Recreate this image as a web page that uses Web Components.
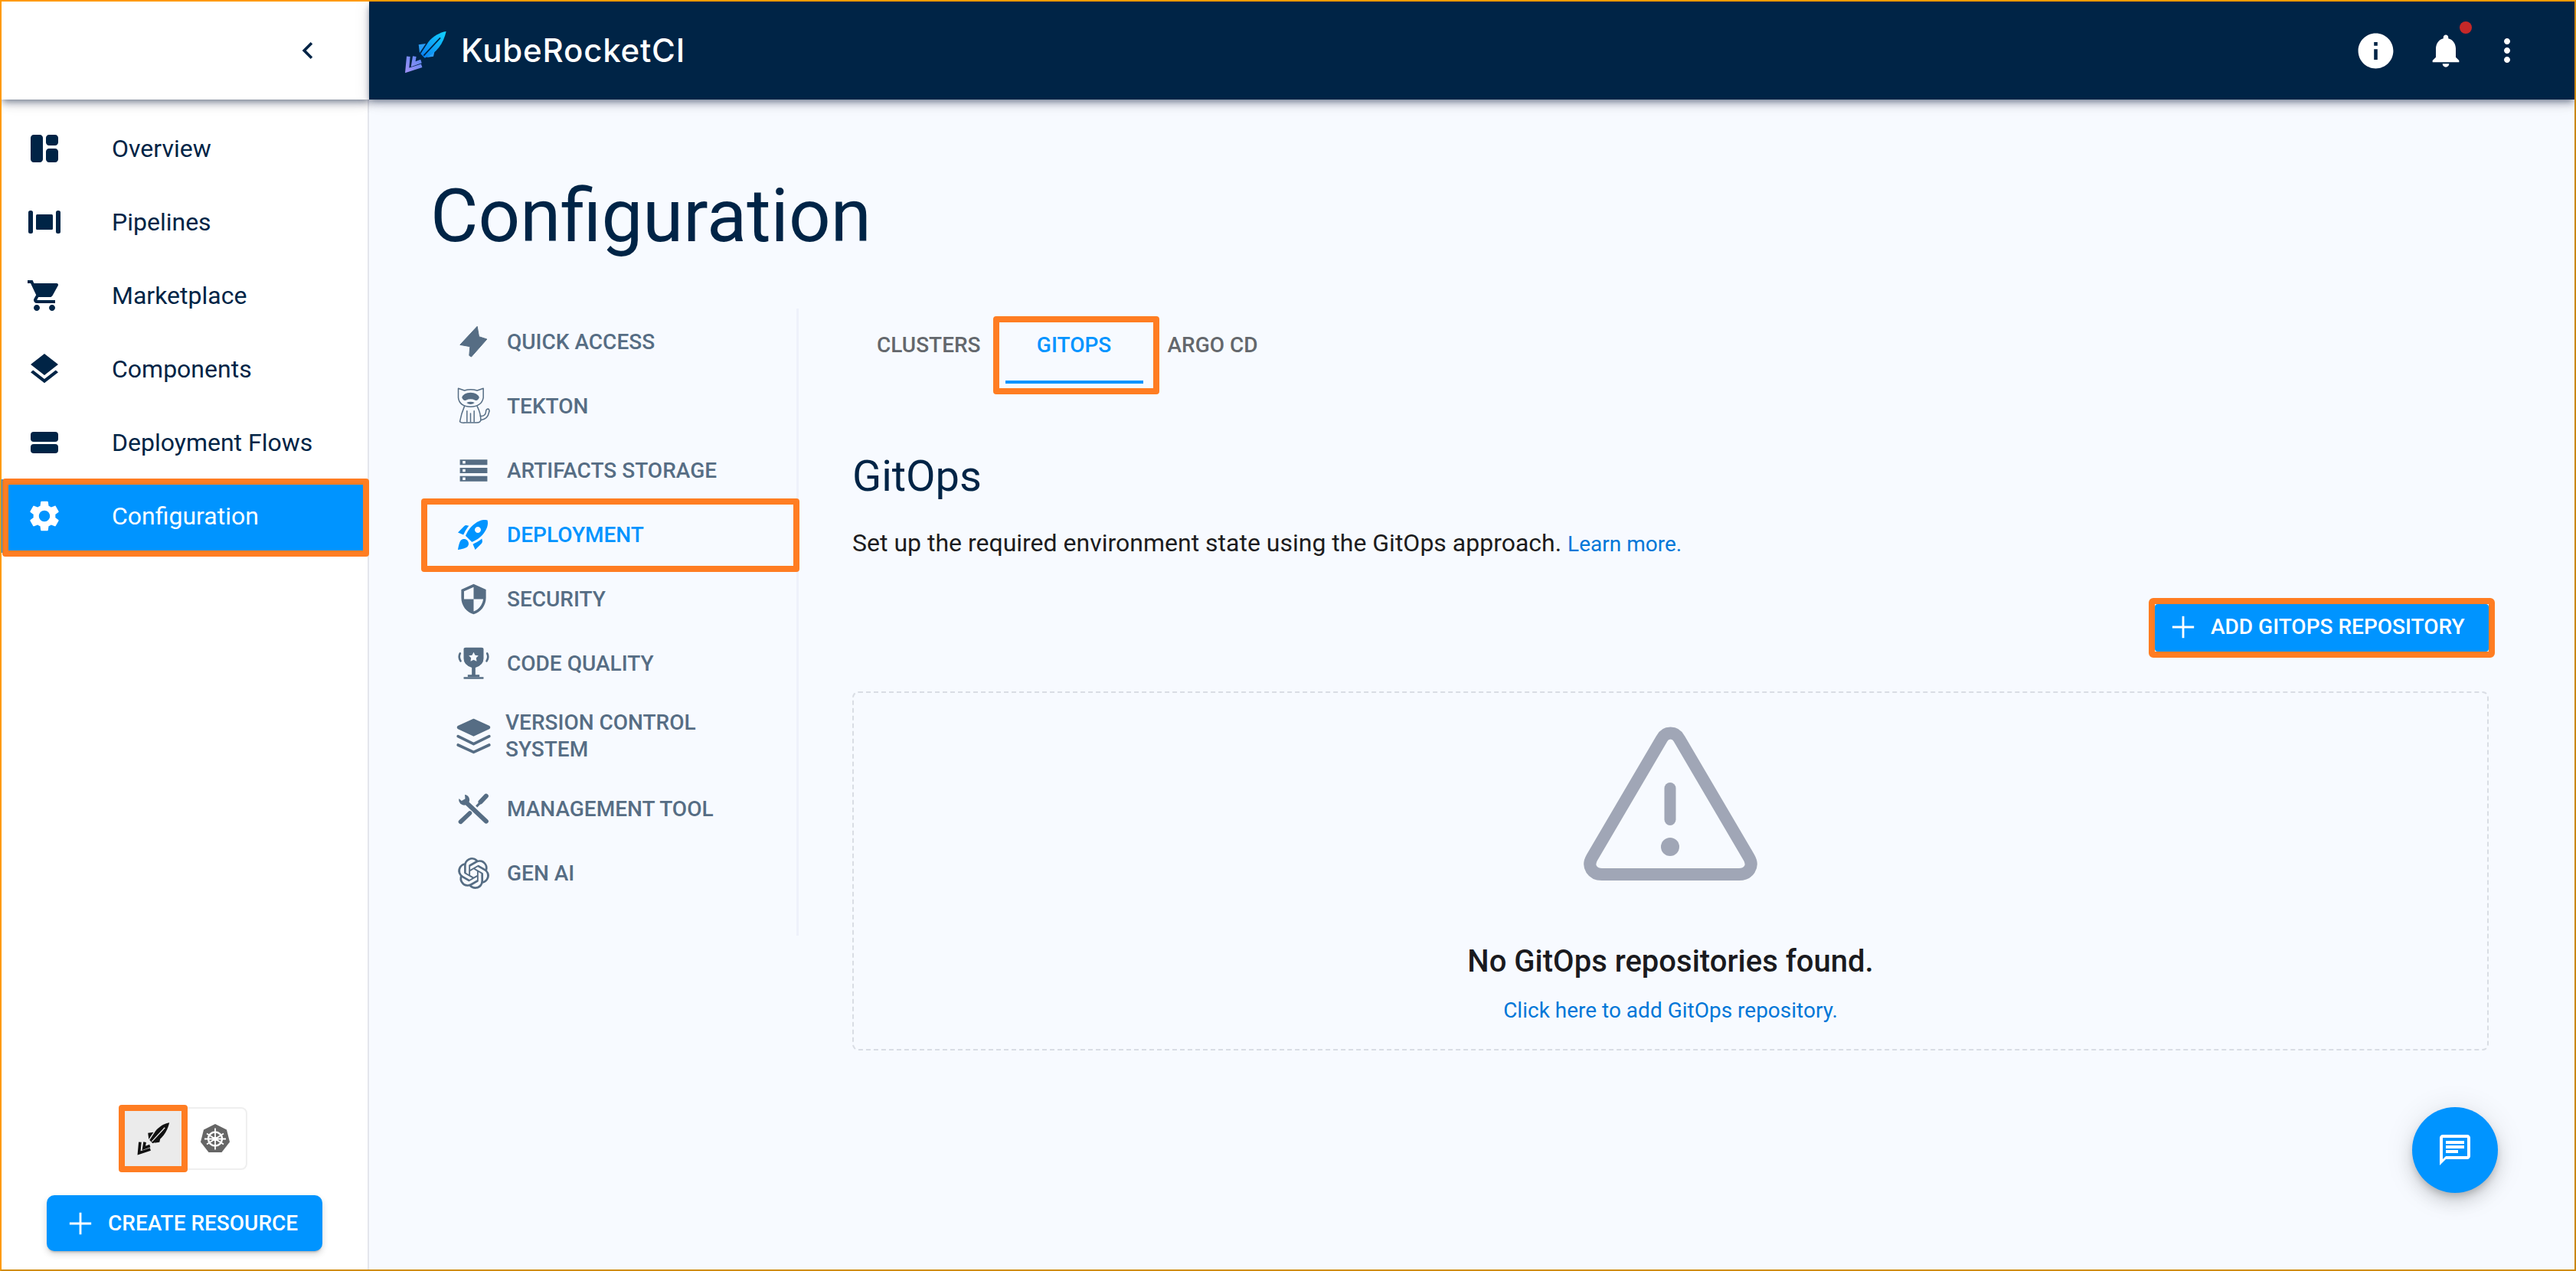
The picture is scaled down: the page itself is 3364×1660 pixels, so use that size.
<!DOCTYPE html>
<html lang="en">
<head>
<meta charset="utf-8">
<title>KubeRocketCI - Configuration</title>
<style>
  html, body { margin: 0; padding: 0; height: 100%; background: #f7faff; }
  body { font-family: Roboto, "Liberation Sans", sans-serif; }
</style>
</head>
<body>
<krci-app>
  <krci-sidebar-head slot="head"></krci-sidebar-head>
  <krci-topbar slot="top"></krci-topbar>

  <krci-sidebar slot="side">
    <krci-nav-item icon="dashboard">Overview</krci-nav-item>
    <krci-nav-item icon="pipelines">Pipelines</krci-nav-item>
    <krci-nav-item icon="cart">Marketplace</krci-nav-item>
    <krci-nav-item icon="layers">Components</krci-nav-item>
    <krci-nav-item icon="flows">Deployment Flows</krci-nav-item>
    <krci-nav-item icon="gear" active>Configuration</krci-nav-item>
    <krci-cluster-switch slot="bottom"></krci-cluster-switch>
    <krci-button slot="bottom" kind="create">CREATE RESOURCE</krci-button>
  </krci-sidebar>

  <krci-page slot="main" title="Configuration">
    <krci-settings-nav slot="nav">
      <krci-settings-item icon="bolt">QUICK ACCESS</krci-settings-item>
      <krci-settings-item icon="tekton">TEKTON</krci-settings-item>
      <krci-settings-item icon="storage">ARTIFACTS STORAGE</krci-settings-item>
      <krci-settings-item icon="rocket" active>DEPLOYMENT</krci-settings-item>
      <krci-settings-item icon="security">SECURITY</krci-settings-item>
      <krci-settings-item icon="trophy">CODE QUALITY</krci-settings-item>
      <krci-settings-item icon="stack" tall>VERSION CONTROL SYSTEM</krci-settings-item>
      <krci-settings-item icon="tools">MANAGEMENT TOOL</krci-settings-item>
      <krci-settings-item icon="openai">GEN AI</krci-settings-item>
    </krci-settings-nav>

    <krci-tabs>
      <krci-tab>CLUSTERS</krci-tab>
      <krci-tab active>GITOPS</krci-tab>
      <krci-tab>ARGO CD</krci-tab>
    </krci-tabs>
    <krci-section heading="GitOps">
      Set up the required environment state using the GitOps approach.
      <a slot="learn">Learn more.</a>
    </krci-section>
    <krci-toolbar>
      <krci-button kind="add">ADD GITOPS REPOSITORY</krci-button>
    </krci-toolbar>
    <krci-empty message="No GitOps repositories found." action="Click here to add GitOps repository."></krci-empty>
    <krci-fab slot="float"></krci-fab>
  </krci-page>
</krci-app>

<script>
const ICONS = {
  dashboard: ['0 0 24 24', '<path d="M9 21H5c-1.1 0-2-.9-2-2V5c0-1.1.9-2 2-2h4c1.1 0 2 .9 2 2v14c0 1.1-.9 2-2 2zm6 0h4c1.1 0 2-.9 2-2v-5c0-1.1-.9-2-2-2h-4c-1.1 0-2 .9-2 2v5c0 1.1.9 2 2 2zm6-13V5c0-1.1-.9-2-2-2h-4c-1.1 0-2 .9-2 2v3c0 1.1.9 2 2 2h4c1.1 0 2-.9 2-2z"/>'],
  pipelines: ['0 0 48 48', '<rect x="3" y="9" width="6" height="30" rx="2.5"/><rect x="39" y="9" width="6" height="30" rx="2.5"/><rect x="13" y="14" width="22" height="20" rx="1.5"/>'],
  cart: ['0 0 24 24', '<path d="M7 18c-1.1 0-1.99.9-1.99 2S5.9 22 7 22s2-.9 2-2-.9-2-2-2zM1 2v2h2l3.6 7.59-1.35 2.45c-.16.28-.25.61-.25.96 0 1.1.9 2 2 2h12v-2H7.42c-.14 0-.25-.11-.25-.25l.03-.12.9-1.63h7.45c.75 0 1.41-.41 1.75-1.03l3.58-6.49c.08-.14.12-.31.12-.48 0-.55-.45-1-1-1H5.21l-.94-2H1zm16 16c-1.1 0-1.99.9-1.99 2s.89 2 1.99 2 2-.9 2-2-.9-2-2-2z"/>'],
  layers: ['0 0 24 24', '<path d="M11.99 18.54l-7.37-5.73L3 14.07l9 7 9-7-1.63-1.27-7.38 5.74zM12 16l7.36-5.73L21 9l-9-7-9 7 1.63 1.27L12 16z"/>'],
  flows: ['0 0 48 48', '<rect x="6" y="10" width="36" height="13" rx="4"/><rect x="6" y="26" width="36" height="12" rx="4"/>'],
  gear: ['0 0 24 24', '<path d="M19.14 12.94c.04-.3.06-.61.06-.94 0-.32-.02-.64-.07-.94l2.03-1.58c.18-.14.23-.41.12-.61l-1.92-3.32c-.12-.22-.37-.29-.59-.22l-2.39.96c-.5-.38-1.03-.7-1.62-.94l-.36-2.54c-.04-.24-.24-.41-.48-.41h-3.84c-.24 0-.43.17-.47.41l-.36 2.54c-.59.24-1.13.57-1.62.94l-2.39-.96c-.22-.08-.47 0-.59.22L2.74 8.87c-.12.21-.08.47.12.61l2.03 1.58c-.05.3-.09.63-.09.94s.02.64.07.94l-2.03 1.58c-.18.14-.23.41-.12.61l1.92 3.32c.12.22.37.29.59.22l2.39-.96c.5.38 1.03.7 1.62.94l.36 2.54c.05.24.24.41.48.41h3.84c.24 0 .44-.17.47-.41l.36-2.54c.59-.24 1.13-.56 1.62-.94l2.39.96c.22.08.47 0 .59-.22l1.92-3.32c.12-.22.07-.47-.12-.61l-2.01-1.58zM12 15.6c-1.98 0-3.6-1.62-3.6-3.6s1.62-3.6 3.6-3.6 3.6 1.62 3.6 3.6-1.62 3.6-3.6 3.6z"/>'],
  bolt: ['213 65 144 144', '<path d="M299 78 L306 118 L337 128 L276 197 L268 192 L271 157 L232 150 Z" stroke="currentColor" stroke-width="3" stroke-linejoin="round"/>'],
  tekton: ['212 312 144 156', `<g fill="none" stroke="currentColor" stroke-width="4.500" stroke-linejoin="round" stroke-linecap="round">
      <path d="M224 322 L248 330 Q272 322 298 330 L322 322 L322 358 Q316 392 272 394 Q228 392 224 358 Z"/>
      <path d="M248 392 Q236 420 230 452 Q236 458 250 456 L296 456 Q312 456 312 444 Q312 420 298 392"/>
      <path d="M258 410 L258 452 M286 410 L286 452 M272 420 L272 452"/>
      <path d="M310 430 Q330 432 332 414 Q332 402 342 402 Q348 408 344 416 Q340 442 312 446"/>
    </g>
    <path d="M238 358 Q244 338 272 338 Q300 338 306 358 Q300 372 290 368 Q272 360 254 368 Q244 372 238 358Z"/>
    <path d="M256 378 Q272 390 288 378 Q272 370 256 378Z"/>`],
  storage: ['0 0 24 24', '<path d="M2 20h20v-4H2v4zm2-3h2v2H4v-2zM2 4v4h20V4H2zm4 3H4V5h2v2zm-4 7h20v-4H2v4zm2-3h2v2H4v-2z"/>'],
  rocket: ['0 0 24 24', '<path fill-rule="evenodd" d="M9.19 6.35c-2.04 2.29-3.44 5.58-3.57 5.89L2 10.69l4.05-4.05c.47-.47 1.15-.68 1.81-.55l1.33.26zM11.17 17s3.74-1.55 5.89-3.7c5.4-5.4 4.5-9.62 4.21-10.57-.95-.3-5.17-1.19-10.57 4.21C8.55 9.09 7 12.83 7 12.83L11.17 17zm6.48-2.19c-2.29 2.04-5.58 3.44-5.89 3.57L13.31 22l4.05-4.05c.47-.47.68-1.15.55-1.81l-.26-1.33zM9 18c0 .83-.34 1.58-.88 2.12C6.94 21.3 2 22 2 22s.7-4.94 1.88-6.12C4.42 15.34 5.17 15 6 15c1.66 0 3 1.34 3 3zm4-9c0-1.1.9-2 2-2s2 .9 2 2-.9 2-2 2-2-.9-2-2z"/>'],
  security: ['0 0 24 24', '<path d="M12 1L3 5v6c0 5.55 3.84 10.74 9 12 5.16-1.26 9-6.45 9-12V5l-9-4zm0 10.99h7c-.53 4.12-3.28 7.79-7 8.94V12H5V6.3l7-3.11v8.8z"/>'],
  trophy: ['213 128 144 144', `<path d="M246 146 Q246 139 254 139 H316 Q324 139 324 146 V182 Q324 208 292 218 V246 H308 V254 H262 V246 H278 V218 Q246 208 246 182 Z"/>
    <rect x="246" y="255" width="78" height="7" rx="1"/>
    <path d="M232 162 Q224 176 234 192 M338 162 Q346 176 336 192" fill="none" stroke="currentColor" stroke-width="8" stroke-linecap="round"/>
    <path d="M285 157 L291 169 L304 171 L295 180 L297 193 L285 187 L273 193 L275 180 L266 171 L279 169 Z" fill="#f7faff"/>`],
  stack: ['210 410 144 144', `<path d="M282 418 L343 446 Q346 449 343 452 L282 481 L221 452 Q218 449 221 446 Z" stroke="currentColor" stroke-width="6" stroke-linejoin="round"/>
    <path d="M221 484 L282 514 L343 484 M221 518 L282 546 L343 518" fill="none" stroke="currentColor" stroke-width="11" stroke-linecap="round" stroke-linejoin="round"/>`],
  tools: ['213 696 144 144', `<path d="M260 748 L334 818" stroke="currentColor" stroke-width="18" stroke-linecap="round"/>
    <circle cx="248" cy="734" r="21"/>
    <path d="M222 708 L250 708 L252 730 L238 738 L224 726 Z" fill="#f7faff"/>
    <path d="M234 820 L270 786" stroke="currentColor" stroke-width="17" stroke-linecap="round"/>
    <path d="M296 760 L314 742" stroke="currentColor" stroke-width="9"/>
    <path d="M312 742 L334 719" stroke="currentColor" stroke-width="18" stroke-linecap="round"/>`],
  openai: ['0 0 24 24', '<path d="M22.2819 9.8211a5.9847 5.9847 0 0 0-.5157-4.9108 6.0462 6.0462 0 0 0-6.5098-2.9A6.0651 6.0651 0 0 0 4.9807 4.1818a5.9847 5.9847 0 0 0-3.9977 2.9 6.0462 6.0462 0 0 0 .7427 7.0966 5.98 5.98 0 0 0 .511 4.9107 6.051 6.051 0 0 0 6.5146 2.9001A5.9847 5.9847 0 0 0 13.2599 24a6.0557 6.0557 0 0 0 5.7718-4.2058 5.9894 5.9894 0 0 0 3.9977-2.9001 6.0557 6.0557 0 0 0-.7475-7.0729zm-9.022 12.6081a4.4755 4.4755 0 0 1-2.8764-1.0408l.1419-.0804 4.7783-2.7582a.7948.7948 0 0 0 .3927-.6813v-6.7369l2.02 1.1686a.071.071 0 0 1 .038.052v5.5826a4.504 4.504 0 0 1-4.4945 4.4944zm-9.6607-4.1254a4.4708 4.4708 0 0 1-.5346-3.0137l.142.0852 4.783 2.7582a.7712.7712 0 0 0 .7806 0l5.8428-3.3685v2.3324a.0804.0804 0 0 1-.0332.0615L9.74 19.9502a4.4992 4.4992 0 0 1-6.1408-1.6464zM2.3408 7.8956a4.485 4.485 0 0 1 2.3655-1.9728V11.6a.7664.7664 0 0 0 .3879.6765l5.8144 3.3543-2.0201 1.1685a.0757.0757 0 0 1-.071 0l-4.8303-2.7865A4.504 4.504 0 0 1 2.3408 7.872zm16.5963 3.8558L13.1038 8.364 15.1192 7.2a.0757.0757 0 0 1 .071 0l4.8303 2.7913a4.4944 4.4944 0 0 1-.6765 8.1042v-5.6772a.79.79 0 0 0-.407-.667zm2.0107-3.0231l-.142-.0852-4.7735-2.7818a.7759.7759 0 0 0-.7854 0L9.409 9.2297V6.8974a.0662.0662 0 0 1 .0284-.0615l4.8303-2.7866a4.4992 4.4992 0 0 1 6.6802 4.66zM8.3065 12.863l-2.02-1.1638a.0804.0804 0 0 1-.038-.0567V6.0742a4.4992 4.4992 0 0 1 7.3757-3.4537l-.142.0805L8.704 5.459a.7948.7948 0 0 0-.3927.6813zm1.0976-2.3654l2.602-1.4998 2.6069 1.4998v2.9994l-2.5974 1.4997-2.6067-1.4997Z"/>'],
  plus: ['0 0 24 24', '<path d="M11 2h2v9h9v2h-9v9h-2v-9H2v-2h9z"/>'],
  chevron: ['0 0 24 24', '<path d="M15.41 7.41L14 6l-6 6 6 6 1.41-1.41L10.83 12z"/>'],
  info: ['0 0 24 24', '<path d="M12 2C6.48 2 2 6.48 2 12s4.48 10 10 10 10-4.48 10-10S17.52 2 12 2zm1 15h-2v-6h2v6zm0-8h-2V7h2v2z"/>'],
  bell: ['0 0 24 24', '<path d="M12 22c1.1 0 2-.9 2-2h-4c0 1.1.89 2 2 2zm6-6v-5c0-3.07-1.64-5.64-4.5-6.32V4c0-.83-.67-1.5-1.5-1.5s-1.5.67-1.5 1.5v.68C7.63 5.36 6 7.92 6 11v5l-2 2v1h16v-1l-2-2z"/>'],
  dots: ['0 0 24 24', '<path d="M12 8c1.1 0 2-.9 2-2s-.9-2-2-2-2 .9-2 2 .9 2 2 2zm0 2c-1.1 0-2 .9-2 2s.9 2 2 2 2-.9 2-2-.9-2-2-2zm0 6c-1.1 0-2 .9-2 2s.9 2 2 2 2-.9 2-2-.9-2-2-2z"/>'],
  chat: ['0 0 24 24', '<path d="M20 2H4c-1.1 0-2 .9-2 2v18l4-4h14c1.1 0 2-.9 2-2V4c0-1.1-.9-2-2-2zm0 14H6l-2 2V4h16v12z"/><path d="M6 6h12v2H6zM6 9h12v2H6zM6 12h8v2H6z"/>'],
  warning: ['0 0 225 200', `<path d="M101 15 C106 5 119 5 124 15 L215 170 C222 182 214 192 202 192 L23 192 C11 192 3 182 10 170 Z" fill="none" stroke="currentColor" stroke-width="16" stroke-linejoin="round"/>
    <rect x="104.500" y="72" width="15" height="56" rx="7.500"/><ellipse cx="112" cy="156" rx="12" ry="12"/>`],
  kube: ['0 0 38 38', `<path d="M19 0 L34 7.500 L38 23.500 L27.500 37 L10.500 37 L0 23.500 L4 7.500 Z" fill="#666"/>
    <g stroke="#fff" fill="none"><circle cx="19" cy="19.500" r="9" stroke-width="2.400"/>
    <path stroke-width="1.800" d="M19 5.500 V33.500 M8 12.500 L30 26.500 M30 12.500 L8 26.500 M5 19.500 H33"/></g>
    <circle cx="19" cy="19.500" r="2.800" fill="#fff"/>`],
  quill: ['25 25 170 170', `<path d="M188 30 C165 33 135 50 118 72 L88 118 L104 134 C150 118 178 75 188 30Z"/>
    <path d="M165 55 L100 125" stroke="#ebebeb" stroke-width="5"/>
    <path d="M80 82 L108 78 L84 114 Z M144 102 L138 128 L112 132 Z"/>
    <path d="M40 128 L35 183 L92 164 M64 128 L59 158 L90 147" fill="none" stroke="currentColor" stroke-width="14"/>`]
};

class KrciIcon extends HTMLElement {
  constructor() {
    super();
    this.attachShadow({ mode: 'open' });
  }
  connectedCallback() {
    const icon = ICONS[this.getAttribute('name')];
    const w = this.getAttribute('size') || 48;
    const h = this.getAttribute('height') || w;
    this.shadowRoot.innerHTML = `
      <style>
        :host { display: inline-flex; flex: none; align-items: center; justify-content: center; }
        svg { display: block; fill: currentColor; overflow: visible; }
      </style>
      <svg xmlns="http://www.w3.org/2000/svg" width="${w}" height="${h}" viewBox="${icon[0]}">${icon[1]}</svg>`;
  }
}

class KrciApp extends HTMLElement {
  constructor() {
    super();
    this.attachShadow({ mode: 'open' });
    this.shadowRoot.innerHTML = `
      <style>
        :host {
          display: grid; box-sizing: border-box; width: 3364px; height: 1660px;
          grid-template-columns: 480px 1fr; grid-template-rows: 128px 1fr;
          border: 2px solid; border-color: #ff9a00 #c98610 #d08d10 #ff9a00;
          background: #f7faff; overflow: hidden;
          font-family: Roboto, "Liberation Sans", sans-serif;
        }
        ::slotted([slot=head]), ::slotted([slot=top]) { z-index: 3; }
        ::slotted([slot=side]) { z-index: 2; }
      </style>
      <slot name="head"></slot><slot name="top"></slot>
      <slot name="side"></slot><slot name="main"></slot>`;
  }
}

const BAR_SHADOW = '0 4px 8px -2px rgba(0,20,50,.45), 0 8px 10px rgba(0,20,50,.12), 0 2px 20px rgba(0,20,50,.1)';

class KrciSidebarHead extends HTMLElement {
  constructor() {
    super();
    this.attachShadow({ mode: 'open' });
    this.shadowRoot.innerHTML = `
      <style>
        :host {
          display: flex; align-items: center; justify-content: flex-end;
          background: #fff; color: #002446; padding-right: 58px;
          box-shadow: ${BAR_SHADOW};
        }
      </style>
      <krci-icon name="chevron" size="44"></krci-icon>`;
  }
}

class KrciTopbar extends HTMLElement {
  constructor() {
    super();
    this.attachShadow({ mode: 'open' });
    this.shadowRoot.innerHTML = `
      <style>
        :host {
          display: flex; align-items: center; background: #002446; color: #fff;
          padding: 0 64px 0 38px; box-shadow: ${BAR_SHADOW};
        }
        .logo { display: flex; align-items: center; gap: 2px; }
        .brand { font: 500 42px Inter, sans-serif; letter-spacing: .8px; margin-top: -1px; }
        svg { display: block; overflow: visible; }
        .actions { margin-left: auto; display: flex; align-items: center; }
        .bell { position: relative; display: flex; margin: 0 30px 0 38px; }
        .badge {
          position: absolute; top: -12px; right: -8px; width: 16px; height: 16px;
          border-radius: 50%; background: #c62828;
        }
      </style>
      <div class="logo">
        <svg width="80" height="70" viewBox="0 0 240 210" aria-hidden="true">
          <defs>
            <linearGradient id="b" x1="1" y1="0" x2="0" y2="1">
              <stop offset="0" stop-color="#12d4ff"/><stop offset="1" stop-color="#0a7cf0"/>
            </linearGradient>
            <linearGradient id="t" x1="0" y1="1" x2="1" y2="0">
              <stop offset="0" stop-color="#9a90f5"/><stop offset="1" stop-color="#5a86f0"/>
            </linearGradient>
          </defs>
          <path d="M80 82 L108 78 L84 114 Z M144 102 L138 128 L112 132 Z" fill="#2a9cf5"/>
          <path d="M188 30 C165 33 135 50 118 72 L88 118 L104 134 C150 118 178 75 188 30Z" fill="url(#b)"/>
          <path d="M165 55 L100 125" stroke="#002446" stroke-width="5"/>
          <path d="M40 128 L35 183 L92 164 M64 128 L59 158 L90 147" fill="none" stroke="url(#t)" stroke-width="14"/>
        </svg>
        <span class="brand">KubeRocketCI</span>
      </div>
      <div class="actions">
        <krci-icon name="info" size="55"></krci-icon>
        <span class="bell"><krci-icon name="bell" size="52"></krci-icon><span class="badge"></span></span>
        <krci-icon name="dots" size="48"></krci-icon>
      </div>`;
  }
}

class KrciSidebar extends HTMLElement {
  constructor() {
    super();
    this.attachShadow({ mode: 'open' });
    this.shadowRoot.innerHTML = `
      <style>
        :host {
          display: flex; flex-direction: column; box-sizing: border-box; background: #fff;
          padding-top: 16px; border-right: 2px solid #e4e6ec;
        }
        .bottom {
          margin-top: auto; display: flex; flex-direction: column; align-items: center;
          gap: 33px; padding-bottom: 24px;
        }
      </style>
      <slot></slot>
      <div class="bottom"><slot name="bottom"></slot></div>`;
  }
}

class KrciNavItem extends HTMLElement {
  constructor() {
    super();
    this.attachShadow({ mode: 'open' });
  }
  connectedCallback() {
    this.shadowRoot.innerHTML = `
      <style>
        :host {
          display: flex; position: relative; align-items: center; height: 96px; padding-left: 32px;
          gap: 64px; color: #002446; font-size: 32px; line-height: 48px;
        }
        :host([active]) { background: #0094ff; color: #fff; }
        :host([active])::after {
          content: ""; position: absolute; left: 1px; right: -2px; top: -1px; bottom: -5px;
          border: 8px solid #ff7d22; border-radius: 4px;
        }
      </style>
      <krci-icon name="${this.getAttribute('icon')}" size="48"></krci-icon>
      <span><slot></slot></span>`;
  }
}

class KrciClusterSwitch extends HTMLElement {
  constructor() {
    super();
    this.attachShadow({ mode: 'open' });
    this.shadowRoot.innerHTML = `
      <style>
        :host {
          display: flex; position: relative; box-sizing: border-box; width: 164px; height: 82px;
          border: 2px solid #efefef; border-radius: 8px;
        }
        .btn { width: 80px; display: flex; align-items: center; justify-content: center; }
        .on { position: relative; background: #ebebeb; color: #111; }
        .on::after {
          content: ""; position: absolute; left: -6px; right: -4px; top: -5px; bottom: -5px;
          border: 8px solid #ff7d22; border-radius: 4px;
        }
      </style>
      <div class="btn on"><krci-icon name="quill" size="44"></krci-icon></div>
      <div class="btn"><krci-icon name="kube" size="38"></krci-icon></div>`;
  }
}

class KrciButton extends HTMLElement {
  constructor() {
    super();
    this.attachShadow({ mode: 'open' });
    this.shadowRoot.innerHTML = `
      <style>
        :host {
          display: inline-flex; position: relative; align-items: center; box-sizing: border-box;
          background: #0094ff; color: #fff; font-size: 28px; font-weight: 500; letter-spacing: 0;
        }
        :host([kind=create]) {
          width: 360px; height: 73px; padding-left: 27px; gap: 19px; border-radius: 10px;
          box-shadow: 0 3px 3px -2px rgba(0,0,0,.25), 0 4px 8px rgba(0,0,0,.16);
        }
        :host([kind=add]) {
          width: 436px; height: 62px; padding: 0 0 3px 20px; gap: 19px; border-radius: 4px;
        }
        :host([kind=add])::after {
          content: ""; position: absolute; inset: -8px;
          border: 8px solid #ff7d22; border-radius: 6px;
        }
      </style>
      <krci-icon name="plus" size="34"></krci-icon>
      <span><slot></slot></span>`;
  }
}

class KrciPage extends HTMLElement {
  constructor() {
    super();
    this.attachShadow({ mode: 'open' });
  }
  connectedCallback() {
    this.shadowRoot.innerHTML = `
      <style>
        :host {
          display: block; position: relative; box-sizing: border-box; padding: 95px 112px 0 80px;
          min-width: 0;
        }
        h1 { margin: 0 0 63px; font-size: 96px; line-height: 115px; font-weight: 400; color: #002446; }
        .body { display: flex; align-items: flex-start; }
        .content { flex: 1; min-width: 0; padding-left: 70px; display: flex; flex-direction: column; }
      </style>
      <h1>${this.getAttribute('title')}</h1>
      <div class="body">
        <slot name="nav"></slot>
        <div class="content"><slot></slot></div>
      </div>
      <slot name="float"></slot>`;
  }
}

class KrciSettingsNav extends HTMLElement {
  constructor() {
    super();
    this.attachShadow({ mode: 'open' });
    this.shadowRoot.innerHTML = `
      <style>
        :host {
          display: block; box-sizing: border-box; flex: none; width: 481px;
          padding: 1px 0 40px; border-right: 3px solid #eef1fb;
        }
      </style>
      <slot></slot>`;
  }
}

class KrciSettingsItem extends HTMLElement {
  constructor() {
    super();
    this.attachShadow({ mode: 'open' });
  }
  connectedCallback() {
    const name = this.getAttribute('icon');
    const dims = {
      bolt: 'size="49" height="48"', tekton: 'size="49" height="52"', trophy: 'size="49" height="48"',
      stack: 'size="49" height="48"', tools: 'size="49" height="48"',
      rocket: 'size="48"', openai: 'size="41"', default: 'size="43"'
    };
    this.shadowRoot.innerHTML = `
      <style>
        :host {
          display: flex; position: relative; align-items: center; height: 84px; padding-left: 35px;
          color: #566d84; font-size: 28px; font-weight: 500; line-height: 35px;
        }
        :host([tall]) { height: 106px; }
        :host([active]) { color: #0094ff; }
        :host([active])::after {
          content: ""; position: absolute; left: -12px; right: -4px; top: -5px; bottom: -7px;
          border: 8px solid #ff7d22; border-radius: 4px;
        }
        .i { width: 42px; display: flex; justify-content: center; flex: none; }
        span { margin-left: 23px; max-width: 340px; }
        :host([tall]) span { margin-left: 21px; }
      </style>
      <div class="i"><krci-icon name="${name}" ${dims[name] || dims.default}></krci-icon></div>
      <span><slot></slot></span>`;
  }
}

class KrciTabs extends HTMLElement {
  constructor() {
    super();
    this.attachShadow({ mode: 'open' });
    this.shadowRoot.innerHTML = `
      <style>:host { display: flex; height: 98px; }</style>
      <slot></slot>`;
  }
}

class KrciTab extends HTMLElement {
  constructor() {
    super();
    this.attachShadow({ mode: 'open' });
    this.shadowRoot.innerHTML = `
      <style>
        :host {
          display: flex; position: relative; box-sizing: border-box; align-items: center; justify-content: center;
          min-width: 180px; padding: 0 32px 3px; color: #63676c; font-size: 28px; font-weight: 500;
        }
        :host([active]) { color: #0094ff; }
        :host([active])::before {
          content: ""; position: absolute; left: 0; right: 0; bottom: 0; height: 4px; background: #0094ff;
        }
        :host([active])::after {
          content: ""; position: absolute; left: -16px; right: -21px; top: 10px; bottom: -14px;
          border: 8px solid #ff7d22; border-radius: 4px;
        }
      </style>
      <slot></slot>`;
  }
}

class KrciSection extends HTMLElement {
  constructor() {
    super();
    this.attachShadow({ mode: 'open' });
  }
  connectedCallback() {
    this.shadowRoot.innerHTML = `
      <style>
        :host { display: block; margin-top: 88px; }
        h2 { margin: 0 0 29px; font-size: 56px; line-height: 67px; font-weight: 400; color: #002446; }
        p { margin: 0; font-size: 32px; line-height: 48px; height: 48px; color: #1c1c20; }
        ::slotted(a) { color: #0077d8; font-size: 28px; }
      </style>
      <h2>${this.getAttribute('heading')}</h2>
      <p><slot></slot> <slot name="learn"></slot></p>`;
  }
}

class KrciToolbar extends HTMLElement {
  constructor() {
    super();
    this.attachShadow({ mode: 'open' });
    this.shadowRoot.innerHTML = `
      <style>:host { display: flex; justify-content: flex-end; margin: 56px 0 52px; }</style>
      <slot></slot>`;
  }
}

class KrciEmpty extends HTMLElement {
  constructor() {
    super();
    this.attachShadow({ mode: 'open' });
  }
  connectedCallback() {
    this.shadowRoot.innerHTML = `
      <style>
        :host {
          display: flex; flex-direction: column; align-items: center; box-sizing: border-box;
          height: 469px; padding-top: 45px; border: 2px dashed #d9dde4; border-radius: 8px;
        }
        krci-icon { color: #a0a6b6; }
        h3 { margin: 78px 0 0; font-size: 40px; line-height: 56px; font-weight: 500; color: #1a1a1e; }
        a { margin-top: 15px; font-size: 28px; line-height: 42px; color: #0077d8; }
      </style>
      <krci-icon name="warning" size="225" height="200"></krci-icon>
      <h3>${this.getAttribute('message')}</h3>
      <a>${this.getAttribute('action')}</a>`;
  }
}

class KrciFab extends HTMLElement {
  constructor() {
    super();
    this.attachShadow({ mode: 'open' });
    this.shadowRoot.innerHTML = `
      <style>
        :host {
          position: absolute; right: 100px; bottom: 100px; width: 112px; height: 112px; border-radius: 50%;
          display: flex; align-items: center; justify-content: center; background: #0094ff; color: #fff;
          box-shadow: 0 6px 10px -2px rgba(0,0,0,.2), 0 12px 20px 2px rgba(0,0,0,.1), 0 4px 36px 6px rgba(0,0,0,.07);
        }
      </style>
      <krci-icon name="chat" size="48"></krci-icon>`;
  }
}

customElements.define('krci-icon', KrciIcon);
customElements.define('krci-app', KrciApp);
customElements.define('krci-sidebar-head', KrciSidebarHead);
customElements.define('krci-topbar', KrciTopbar);
customElements.define('krci-sidebar', KrciSidebar);
customElements.define('krci-nav-item', KrciNavItem);
customElements.define('krci-cluster-switch', KrciClusterSwitch);
customElements.define('krci-button', KrciButton);
customElements.define('krci-page', KrciPage);
customElements.define('krci-settings-nav', KrciSettingsNav);
customElements.define('krci-settings-item', KrciSettingsItem);
customElements.define('krci-tabs', KrciTabs);
customElements.define('krci-tab', KrciTab);
customElements.define('krci-section', KrciSection);
customElements.define('krci-toolbar', KrciToolbar);
customElements.define('krci-empty', KrciEmpty);
customElements.define('krci-fab', KrciFab);
</script>
</body>
</html>
